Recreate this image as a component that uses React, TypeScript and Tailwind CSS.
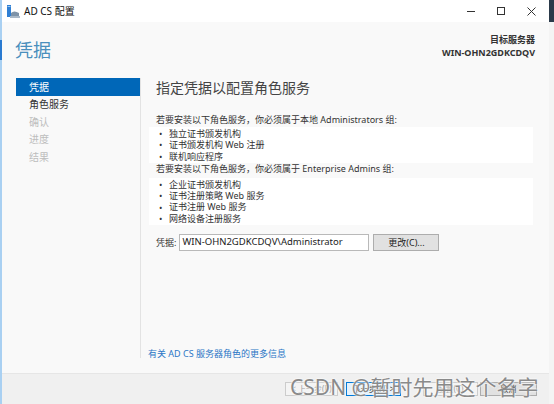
import React from "react";

const font = { fontFamily: '"Noto Sans", "Noto Sans CJK SC", sans-serif' };

function Bullet({ children }: { children: React.ReactNode }) {
  return (
    <div className="flex items-center h-[11.3px]">
      <span className="w-[13px] pl-[3px] text-[9px] leading-none">•</span>
      <span>{children}</span>
    </div>
  );
}

export default function App() {
  return (
    <div
      className="w-[554px] h-[404px] flex bg-white text-[#333] overflow-hidden relative"
      style={font}
    >
      {/* left border */}
      <div className="w-[2px] h-full bg-[#a9d0f2] flex flex-col">
        <div className="h-[40px]" />
        <div className="h-[20px] bg-[#2a7ad0]" />
      </div>

      {/* window */}
      <div className="w-[547px] h-full flex flex-col">
        {/* title bar */}
        <div className="h-[22px] bg-white flex items-center shrink-0">
          <div className="ml-[5px] w-[13px] h-[13px] relative">
            <svg width="13" height="13" viewBox="0 0 13 13">
              <rect x="0" y="0" width="4" height="12" fill="#2f7fd4" />
              <rect x="0.5" y="1" width="3" height="1" fill="#9cc8ef" />
              <path d="M4 12 L4 8 Q7 5 12 8 L12 12 Z" fill="#7e93a8" />
              <rect x="3" y="11" width="10" height="2" fill="#a9b8c7" />
            </svg>
          </div>
          <span className="ml-[4px] text-[10px] text-[#111]">AD CS 配置</span>
          <div className="flex-1" />
          <div className="flex items-center text-[#222]">
            <div className="w-[30px] flex justify-center">
              <div className="w-[8px] h-[1px] bg-[#333]" />
            </div>
            <div className="w-[30px] flex justify-center">
              <div className="w-[8px] h-[8px] border border-[#333]" />
            </div>
            <div className="w-[30px] flex justify-center">
              <svg width="9" height="9" viewBox="0 0 9 9">
                <path d="M0.5 0.5 L8.5 8.5 M8.5 0.5 L0.5 8.5" stroke="#333" strokeWidth="1" />
              </svg>
            </div>
            <div className="w-[3px]" />
          </div>
        </div>

        {/* body */}
        <div className="flex-1 bg-[#f9f9f9] flex flex-col">
          {/* header */}
          <div className="h-[56px] flex justify-between shrink-0">
            <div className="pl-[13px] pt-[16px] text-[18px] leading-[24px] text-[#4a8fbd]">凭据</div>
            <div className="pr-[14px] pt-[11px] text-right text-[9px] font-bold leading-[13px] text-[#333]">
              <div>目标服务器</div>
              <div>WIN-OHN2GDKCDQV</div>
            </div>
          </div>

          {/* main */}
          <div className="flex-1 flex">
            {/* nav */}
            <div className="w-[139px] pl-[14px] border-r border-[#e3e3e3] mb-[15px] text-[10px]">
              <div className="h-[18px] bg-[#0067b8] text-white flex items-center pl-[13px]">凭据</div>
              <div className="h-[17.5px] flex items-center pl-[13px] text-[#333]">角色服务</div>
              <div className="h-[17.5px] flex items-center pl-[13px] text-[#bdbdbd]">确认</div>
              <div className="h-[17.5px] flex items-center pl-[13px] text-[#bdbdbd]">进度</div>
              <div className="h-[17.5px] flex items-center pl-[13px] text-[#bdbdbd]">结果</div>
            </div>

            {/* content */}
            <div className="flex-1 flex flex-col pl-[8px] pr-[16px] text-[9px] text-[#333]">
              <div className="pl-[7px] pt-[1px] text-[14px] leading-[18px] text-[#444]">指定凭据以配置角色服务</div>
              <div className="pl-[7px] mt-[17px] leading-[12px]">若要安装以下角色服务，你必须属于本地 Administrators 组:</div>
              <div className="bg-white mt-[1px] py-[1px] pl-[7px] leading-[11.3px]">
                <Bullet>独立证书颁发机构</Bullet>
                <Bullet>证书颁发机构 Web 注册</Bullet>
                <Bullet>联机响应程序</Bullet>
              </div>
              <div className="pl-[7px] leading-[12px]">若要安装以下角色服务，你必须属于 Enterprise Admins 组:</div>
              <div className="bg-white mt-[3px] py-[1px] pl-[7px] leading-[11.3px]">
                <Bullet>企业证书颁发机构</Bullet>
                <Bullet>证书注册策略 Web 服务</Bullet>
                <Bullet>证书注册 Web 服务</Bullet>
                <Bullet>网络设备注册服务</Bullet>
              </div>
              <div className="pl-[7px] mt-[9px] flex items-center">
                <span>凭据:</span>
                <div className="ml-[3px] w-[190px] h-[17px] bg-white border border-[#b9b9b9] flex items-center pl-[2px] text-[9.5px] text-[#222]">
                  WIN-OHN2GDKCDQV\Administrator
                </div>
                <div className="ml-[4px] w-[66px] h-[17px] bg-[#e1e1e1] border border-[#adadad] flex items-center justify-center text-[9px] text-[#222]">
                  更改(C)...
                </div>
              </div>
              <div className="flex-1" />
              <div className="-ml-[1px] mb-[13px] text-[9px] text-[#2a76c6]">有关 AD CS 服务器角色的更多信息</div>
            </div>
          </div>

          {/* footer */}
          <div className="h-[31px] bg-[#f0f0f0] border-t border-[#e6e6e6] flex items-start pt-[8px] shrink-0 text-[8px]">
            <div className="w-[283px]" />
            <div className="w-[53px] h-[14px] border border-[#cccccc] bg-[#f4f4f4] text-[#a0a0a0] flex items-center justify-center">&lt; 上一步(P)</div>
            <div className="w-[8px]" />
            <div className="w-[55px] h-[14px] border border-[#0078d7] bg-[#e5f1fb] text-[#222] flex items-center justify-center">下一步(N) &gt;</div>
            <div className="w-[22px]" />
            <div className="w-[55px] h-[14px] border border-[#cccccc] bg-[#f4f4f4] text-[#a0a0a0] flex items-center justify-center">配置(C)</div>
            <div className="w-[2px]" />
            <div className="w-[57px] h-[14px] border border-[#adadad] bg-[#e1e1e1] text-[#222] flex items-center justify-center">取消</div>
          </div>
        </div>
      </div>

      {/* right edge (desktop behind) */}
      <div className="w-[5px] h-full bg-[#f4f4f4] flex flex-col">
        <div className="h-[22px] bg-[#2b3a4a]" />
      </div>

      {/* watermark */}
      <div className="absolute left-[290px] top-[374px] text-[21px] leading-[26px] text-[#8a8a8a] [text-shadow:0_0_2px_#ffffff,0_0_2px_#ffffff] whitespace-nowrap">
        CSDN @暂时先用这个名字
      </div>
    </div>
  );
}
